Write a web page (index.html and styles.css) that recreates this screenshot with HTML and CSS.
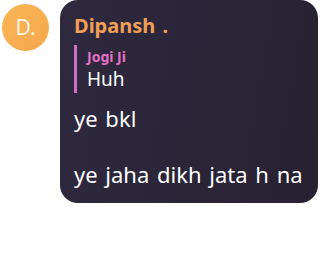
FILE: index.html
```html
<!DOCTYPE html>
<html>
<head>
<meta charset="utf-8">
<title>chat</title>
<link rel="stylesheet" href="styles.css">
</head>
<body>
<div class="msg">
    <div class="avatar">D.</div>
    <div class="bubble">
        <div class="name">Dipansh .</div>
        <div class="reply">
            <div class="reply-name">Jogi Ji</div>
            <div class="reply-text">Huh</div>
        </div>
        <div class="text">ye bkl

ye jaha dikh jata h na</div>
    </div>
</div>
</body>
</html>
```

FILE: styles.css
```css
body{margin:0; background:#fff; font-family:"Noto Sans", "Open Sans", sans-serif;}
.msg{display:flex; align-items:flex-start; gap:11px; padding-left:2px;}
.avatar{width:47px; height:47px; margin-top:4px; flex:none; border-radius:50%; background:linear-gradient(135deg, #fbb655, #f4a74c); color:#fff6e6; font-size:21px; line-height:47px; text-align:center;}
.bubble{padding:14px 15px 15px 14px; border-radius:18px; background:linear-gradient(100deg, #2f2940, #272131); color:#fff;}
.name{font-size:20px; font-weight:bold; line-height:24px; word-spacing:2px; color:#f19f55;}
.reply{margin-top:7px; padding:2px 0 2px 10px; border-left:3px solid #d56fc3;}
.reply-name{font-size:14px; font-weight:bold; line-height:20px; color:#e571c6;}
.reply-text{font-size:19px; line-height:24px;}
.text{margin-top:11px; font-size:22px; line-height:28px; word-spacing:2px; white-space:pre-wrap;}
```
